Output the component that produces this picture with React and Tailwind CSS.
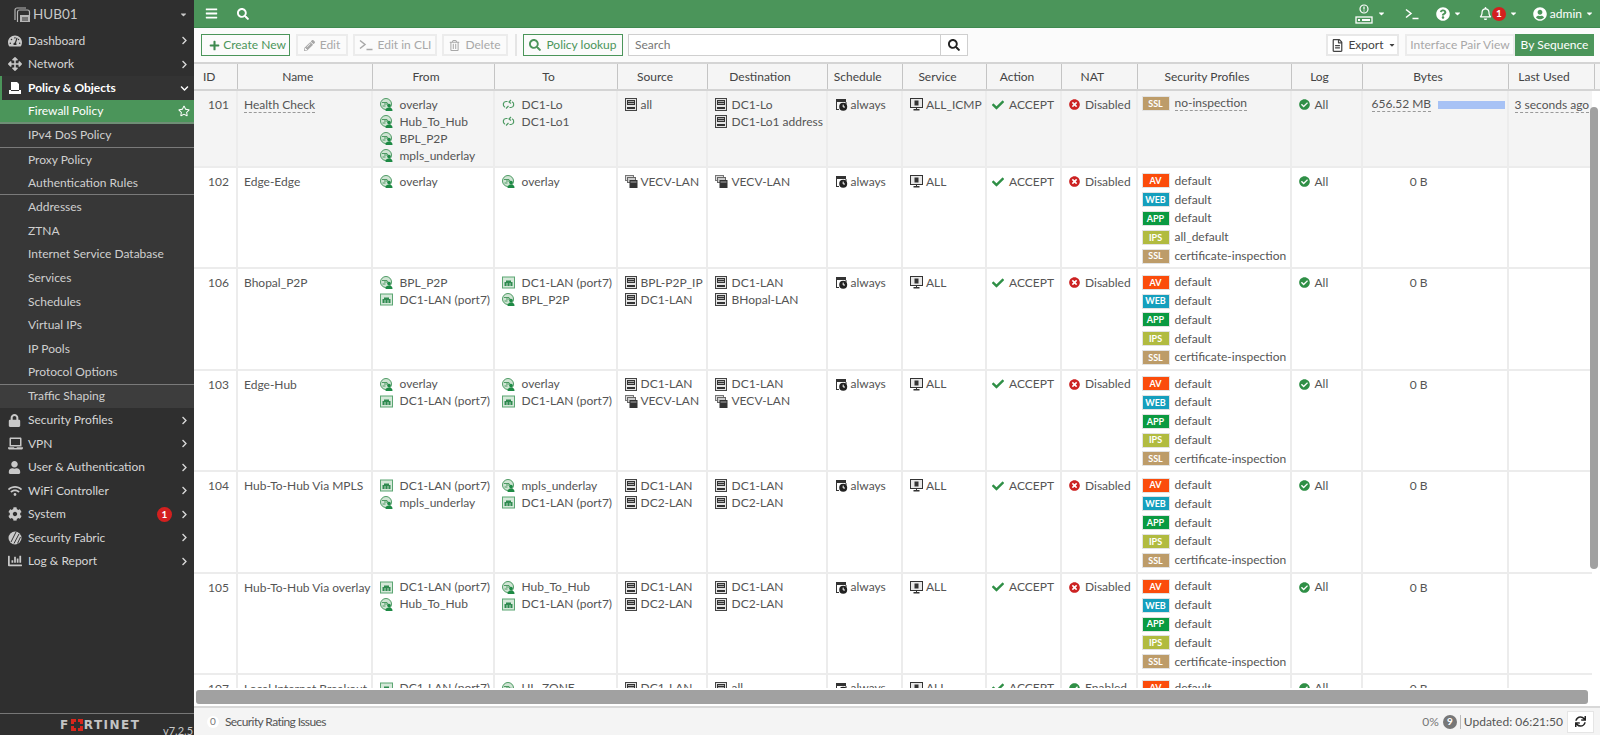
import {
  FaTachometerAlt, FaArrowsAlt, FaLock, FaLaptop, FaUser, FaWifi, FaCog, FaChartBar,
  FaChevronRight, FaChevronDown, FaRegStar, FaSearch, FaBars, FaPlus, FaPencilAlt,
  FaRegTrashAlt, FaRegFileAlt, FaCheck, FaTimesCircle, FaCheckCircle, FaQuestionCircle,
  FaRegBell, FaUserCircle, FaSync, FaCaretDown,
} from 'react-icons/fa'

function PolicyIcon() {
  return (
    <svg width="14" height="14" viewBox="0 0 14 14">
      <path d="M3 1h6l2 2v6H3z" fill="#fff" />
      <path d="M1 9h12v4H1z" fill="#fff" />
      <path d="M3 9h8v1H3z" fill="#333" />
    </svg>
  )
}

function FabricIcon() {
  return (
    <svg width="14" height="14" viewBox="0 0 14 14">
      <circle cx="7" cy="7" r="6.5" fill="#c9c9c9" />
      <path d="M3 11L8 1M6 12.5L11 3M9.5 12.5L12.5 6" stroke="#333" strokeWidth="1" />
    </svg>
  )
}

function HubIcon() {
  return (
    <svg width="20" height="20" viewBox="0 0 20 20" fill="none" stroke="#b5b5b5" strokeWidth="1.2">
      <path d="M3 15V5a2 2 0 0 1 2-2h9" />
      <path d="M5.5 17V7a2 2 0 0 1 2-2h8a2 2 0 0 1 2 2v3" />
      <rect x="8" y="10" width="10" height="7" fill="#b5b5b5" stroke="none" />
      <path d="M10 13h6M10 15h6" stroke="#333" strokeWidth="1" />
    </svg>
  )
}

function ZoneIcon() {
  return (
    <svg width="13" height="13" viewBox="0 0 13 13" className="shrink-0">
      <circle cx="6" cy="6" r="5.5" fill="#cfe4d3" stroke="#4d9a63" strokeWidth="1" />
      <path d="M2 4.5h5l1 1.5H4M2.5 8h3" stroke="#4d9a63" strokeWidth="1" fill="none" />
      <circle cx="9" cy="7.6" r="1.8" fill="#1e8a45" />
      <path d="M5.5 13c0-2.4 1.5-3.4 3.5-3.4s3.5 1 3.5 3.4z" fill="#1e8a45" />
    </svg>
  )
}

function IfaceIcon() {
  return (
    <svg width="13" height="13" viewBox="0 0 13 13" className="shrink-0">
      <rect x="0.5" y="1" width="12" height="11" fill="#d5e8d9" stroke="#5ba672" />
      <path d="M2.5 10V6h1.5V4.5h5V6h1.5v4z" fill="#2f8a50" />
      <path d="M5 7v3M8 7v3" stroke="#d5e8d9" strokeWidth="0.8" />
    </svg>
  )
}

function LoopIcon() {
  return (
    <svg width="13" height="13" viewBox="0 0 13 13" fill="none" stroke="#4d9a63" strokeWidth="1.2" className="shrink-0">
      <path d="M5.5 3.5H4a3 3 0 0 0-1 5.7" />
      <path d="M7.5 9.5H9a3 3 0 0 0 1-5.7" />
      <path d="M6.5 8l-2.5 2.5M9 2l-2 2 2 1.5" />
    </svg>
  )
}

function AddrIcon() {
  return (
    <svg width="13" height="13" viewBox="0 0 13 13" className="shrink-0">
      <rect x="0.5" y="0.5" width="11" height="12" fill="#e4e4e4" stroke="#444" />
      <rect x="2" y="2" width="8" height="5" fill="#333" />
      <path d="M3 3.5h6M3 5.5h6" stroke="#ddd" strokeWidth="0.7" />
      <rect x="2" y="9" width="8" height="2" fill="#333" />
    </svg>
  )
}

function GroupIcon() {
  return (
    <svg width="13" height="13" viewBox="0 0 13 13" className="shrink-0">
      <rect x="0.5" y="0.5" width="8" height="5" fill="#ddd" stroke="#777" />
      <rect x="2.5" y="2.5" width="8" height="5" fill="#ccc" stroke="#666" />
      <rect x="4.5" y="5" width="8" height="8" fill="#333" />
      <path d="M5.5 7h6" stroke="#ddd" strokeWidth="0.7" />
    </svg>
  )
}

function SchedIcon() {
  return (
    <svg width="13" height="13" viewBox="0 0 13 13" className="shrink-0">
      <path d="M1 1h10v3H2v8H1z" fill="#333" />
      <path d="M2 11.5h2" stroke="#333" />
      <path d="M11 4v2" stroke="#333" />
      <circle cx="8.2" cy="8.7" r="4" fill="#222" />
      <path d="M8.2 6.6v2.4h1.8" stroke="#fff" strokeWidth="1" fill="none" />
    </svg>
  )
}

function ServiceIcon() {
  return (
    <svg width="13" height="13" viewBox="0 0 13 13" className="shrink-0">
      <rect x="0.5" y="0.5" width="12" height="9" fill="#e8e8e8" stroke="#333" />
      <path d="M4.5 2.5h4v5h-4z" fill="#333" />
      <path d="M6 9h1v2h2.5v1.5h-6V11H6z" fill="#333" />
    </svg>
  )
}

function DeviceIcon() {
  return (
    <svg width="18" height="20" viewBox="0 0 18 20" fill="none" stroke="#fff">
      <circle cx="9" cy="5" r="4" strokeWidth="1.2" />
      <path d="M9 2.5v3M9 6.5v1" strokeWidth="1.2" />
      <rect x="1" y="13" width="16" height="6" strokeWidth="1.3" />
      <path d="M3 16h2M7 16h8" strokeWidth="2" />
    </svg>
  )
}

function Prompt() {
  return (
    <svg width="14" height="12" viewBox="0 0 14 12" fill="none" stroke="currentColor" strokeWidth="1.5" className="shrink-0">
      <path d="M1 1.5L6 5.5L1 9.5M7.5 10.5H13.5" />
    </svg>
  )
}

const iconKinds = {
  zone: ZoneIcon,
  iface: IfaceIcon,
  loop: LoopIcon,
  addr: AddrIcon,
  group: GroupIcon,
}

const navTop = [
  { label: 'Dashboard', icon: <FaTachometerAlt size={14} /> },
  { label: 'Network', icon: <FaArrowsAlt size={14} /> },
]

const subNav = [
  { label: 'IPv4 DoS Policy', line: true },
  { label: 'Proxy Policy' },
  { label: 'Authentication Rules', line: true },
  { label: 'Addresses' },
  { label: 'ZTNA' },
  { label: 'Internet Service Database' },
  { label: 'Services' },
  { label: 'Schedules' },
  { label: 'Virtual IPs' },
  { label: 'IP Pools' },
  { label: 'Protocol Options', line: true },
  { label: 'Traffic Shaping' },
]

const navBottom = [
  { label: 'Security Profiles', icon: <FaLock size={13} /> },
  { label: 'VPN', icon: <FaLaptop size={15} /> },
  { label: 'User & Authentication', icon: <FaUser size={13} /> },
  { label: 'WiFi Controller', icon: <FaWifi size={14} /> },
  { label: 'System', icon: <FaCog size={14} />, badge: '1' },
  { label: 'Security Fabric', icon: <FabricIcon /> },
  { label: 'Log & Report', icon: <FaChartBar size={14} /> },
]

const columns = [
  { name: 'ID', w: 44, cls: 'text-left pl-[9px]' },
  { name: 'Name', w: 134.5 },
  { name: 'From', w: 122 },
  { name: 'To', w: 123 },
  { name: 'Source', w: 90 },
  { name: 'Destination', w: 120 },
  { name: 'Schedule', w: 75.5 },
  { name: 'Service', w: 84 },
  { name: 'Action', w: 75 },
  { name: 'NAT', w: 75.5 },
  { name: 'Security Profiles', w: 154 },
  { name: 'Log', w: 71 },
  { name: 'Bytes', w: 146 },
  { name: 'Last Used', w: 86 },
]

const stdProfiles = (ips = 'default') => [
  ['AV', 'default'],
  ['WEB', 'default'],
  ['APP', 'default'],
  ['IPS', ips],
  ['SSL', 'certificate-inspection'],
]

const rows = [
  {
    id: 101, name: 'Health Check', dashed: true, height: 'h-[77px]', bg: 'bg-[#f4f4f4]',
    from: [['zone', 'overlay'], ['zone', 'Hub_To_Hub'], ['zone', 'BPL_P2P'], ['zone', 'mpls_underlay']],
    to: [['loop', 'DC1-Lo'], ['loop', 'DC1-Lo1']],
    src: [['addr', 'all']],
    dst: [['addr', 'DC1-Lo'], ['addr', 'DC1-Lo1 address']],
    service: 'ALL_ICMP',
    profiles: [['SSL', 'no-inspection', true]],
    bytes: '656.52 MB', used: '3 seconds ago',
  },
  {
    id: 102, name: 'Edge-Edge',
    from: [['zone', 'overlay']],
    to: [['zone', 'overlay']],
    src: [['group', 'VECV-LAN']],
    dst: [['group', 'VECV-LAN']],
    service: 'ALL',
    profiles: stdProfiles('all_default'),
    bytes: '0 B',
  },
  {
    id: 106, name: 'Bhopal_P2P',
    from: [['zone', 'BPL_P2P'], ['iface', 'DC1-LAN (port7)']],
    to: [['iface', 'DC1-LAN (port7)'], ['zone', 'BPL_P2P']],
    src: [['addr', 'BPL-P2P_IP'], ['addr', 'DC1-LAN']],
    dst: [['addr', 'DC1-LAN'], ['addr', 'BHopal-LAN']],
    service: 'ALL',
    profiles: stdProfiles(),
    bytes: '0 B',
  },
  {
    id: 103, name: 'Edge-Hub',
    from: [['zone', 'overlay'], ['iface', 'DC1-LAN (port7)']],
    to: [['zone', 'overlay'], ['iface', 'DC1-LAN (port7)']],
    src: [['addr', 'DC1-LAN'], ['group', 'VECV-LAN']],
    dst: [['addr', 'DC1-LAN'], ['group', 'VECV-LAN']],
    service: 'ALL',
    profiles: stdProfiles(),
    bytes: '0 B',
  },
  {
    id: 104, name: 'Hub-To-Hub Via MPLS',
    from: [['iface', 'DC1-LAN (port7)'], ['zone', 'mpls_underlay']],
    to: [['zone', 'mpls_underlay'], ['iface', 'DC1-LAN (port7)']],
    src: [['addr', 'DC1-LAN'], ['addr', 'DC2-LAN']],
    dst: [['addr', 'DC1-LAN'], ['addr', 'DC2-LAN']],
    service: 'ALL',
    profiles: stdProfiles(),
    bytes: '0 B',
  },
  {
    id: 105, name: 'Hub-To-Hub Via overlay',
    from: [['iface', 'DC1-LAN (port7)'], ['zone', 'Hub_To_Hub']],
    to: [['zone', 'Hub_To_Hub'], ['iface', 'DC1-LAN (port7)']],
    src: [['addr', 'DC1-LAN'], ['addr', 'DC2-LAN']],
    dst: [['addr', 'DC1-LAN'], ['addr', 'DC2-LAN']],
    service: 'ALL',
    profiles: stdProfiles(),
    bytes: '0 B',
  },
  {
    id: 107, name: 'Local Internet Breakout', nat: true,
    from: [['iface', 'DC1-LAN (port7)']],
    to: [['zone', 'UL_ZONE']],
    src: [['addr', 'DC1-LAN']],
    dst: [['addr', 'all']],
    service: 'ALL',
    profiles: stdProfiles(),
    bytes: '0 B',
  },
]

const badgeColors = {
  AV: 'bg-[#fb4c0b]',
  WEB: 'bg-[#159fbd]',
  APP: 'bg-[#0a9a41]',
  IPS: 'bg-[#b1bb40]',
  SSL: 'bg-[#bd9c69]',
}

function SideRow({ label, icon, badge, open }) {
  return (
    <div className="h-[23.5px] flex items-center text-[#d6d6d6]">
      <span className="w-[28px] pl-[8px] flex items-center text-[#c8c8c8]">{icon}</span>
      <span className="flex-1">{label}</span>
      {badge && (
        <span className="w-[15px] h-[15px] rounded-full bg-[#d3201f] text-white text-[10px] font-bold flex items-center justify-center mr-[8px]">
          {badge}
        </span>
      )}
      {open ? <FaChevronDown size={9} className="mr-[4px]" /> : <FaChevronRight size={9} className="mr-[5px]" />}
    </div>
  )
}

function Sidebar() {
  return (
    <aside className="w-[194px] shrink-0 bg-[#2f2f2f] flex flex-col text-[12px]">
      <div className="h-[29px] flex items-center pl-[12px] pr-[6px] text-[#c8c8c8]">
        <HubIcon />
        <span className="ml-[1px] flex-1 text-[13.5px]">HUB01</span>
        <FaCaretDown size={9} />
      </div>
      {navTop.map(n => <SideRow key={n.label} {...n} />)}

      <div className="bg-[#373737]">
        <div className="h-[24px] flex items-center border-l-[2px] border-[#4b955a] text-white font-bold bg-[#333]">
          <span className="w-[26px] pl-[6px] flex items-center"><PolicyIcon /></span>
          <span className="flex-1">Policy &amp; Objects</span>
          <FaChevronDown size={9} className="mr-[5px]" />
        </div>
        <div className="h-[24px] flex items-center pl-[28px] pr-[4px] bg-[#4b955a] text-white border-b-[2px] border-[#6f8f76]">
          <span className="flex-1">Firewall Policy</span>
          <FaRegStar size={12} />
        </div>
        {subNav.map(n => (
          <div
            key={n.label}
            className={`h-[23.7px] flex items-center pl-[28px] text-[#cfcfcf] ${n.line ? 'border-b-[1.5px] border-[#7a7a7a]' : ''} ${n.label === 'Traffic Shaping' ? 'bg-[#3d3d3d]' : ''}`}
          >
            {n.label}
          </div>
        ))}
      </div>

      {navBottom.map(n => <SideRow key={n.label} {...n} />)}

      <div className="mt-auto h-[22px] border-t-[1.5px] border-[#777] flex items-center relative overflow-hidden">
        <span className="ml-[60px] flex items-center text-[#c4c4c4] font-bold text-[12px] tracking-[1.5px] font-['DejaVu_Sans']">
          F
          <svg width="12" height="12" viewBox="0 0 12 12" className="mx-[1px]">
            <path d="M0 0h5v3H3v2H0zM7 0h5v5H9V3H7zM0 7h3v2h2v3H0zM9 7h3v5H7V9h2z" fill="#d8261c" />
          </svg>
          RTINET
        </span>
        <span className="absolute left-[163px] top-[9px] text-[#c8c8c8] text-[11px]">v7.2.5</span>
      </div>
    </aside>
  )
}

function TopBar() {
  return (
    <header className="h-[28px] shrink-0 bg-[#4b955a] border-b border-[#3f8a50] flex items-center text-white">
      <FaBars size={13} className="ml-[11px]" />
      <FaSearch size={12} className="ml-[19px]" />
      <div className="ml-auto flex items-center">
        <DeviceIcon />
        <FaCaretDown size={9} className="ml-[4px]" />
        <span className="ml-[19px]"><Prompt /></span>
        <FaQuestionCircle size={14} className="ml-[17px]" />
        <FaCaretDown size={9} className="ml-[3px]" />
        <FaRegBell size={13} className="ml-[17px]" />
        <span className="w-[14px] h-[14px] rounded-full bg-[#d3201f] text-[10px] font-bold flex items-center justify-center">1</span>
        <FaCaretDown size={9} className="ml-[3px]" />
        <FaUserCircle size={14} className="ml-[15px]" />
        <span className="ml-[3px] text-[12px]">admin</span>
        <FaCaretDown size={9} className="ml-[3px] mr-[6px]" />
      </div>
    </header>
  )
}

function Toolbtn({ w, icon, children, ml = 'ml-[5px]' }) {
  return (
    <button className={`${w} ${ml} h-[22px] shrink-0 border-2 border-[#ececec] text-[#a8a8a8] flex items-center justify-center gap-[5px]`}>
      {icon}
      {children}
    </button>
  )
}

function Toolbar() {
  return (
    <div className="h-[34px] shrink-0 bg-[#fbfbfb] flex items-center pl-[7px] text-[12px]">
      <button className="w-[89px] h-[22px] shrink-0 border border-[#4b955a] text-[#4b955a] flex items-center justify-center gap-[3px] pl-[4px]">
        <FaPlus size={11} className="text-[#3d8a4e]" />
        Create New
      </button>
      <Toolbtn w="w-[52px]" ml="ml-[6px]" icon={<FaPencilAlt size={11} />}>Edit</Toolbtn>
      <Toolbtn w="w-[84px]" icon={<Prompt />}>Edit in CLI</Toolbtn>
      <Toolbtn w="w-[66px]" icon={<FaRegTrashAlt size={11} />}>Delete</Toolbtn>
      <span className="w-[2px] h-[22px] bg-[#e5e5e5] ml-[7px] mr-[6px]" />
      <button className="w-[100px] h-[22px] shrink-0 border border-[#4b955a] text-[#4b955a] flex items-center justify-center gap-[5px]">
        <FaSearch size={12} />
        Policy lookup
      </button>
      <div className="ml-[5px] w-[340px] h-[22px] border border-[#cfcfcf] bg-white flex items-center">
        <span className="flex-1 pl-[6px] text-[#777]">Search</span>
        <span className="w-[27px] h-full border-l border-[#cfcfcf] flex items-center justify-center text-[#222]">
          <FaSearch size={12} />
        </span>
      </div>
      <div className="ml-auto flex items-center mr-[6px]">
        <button className="w-[73px] h-[22px] border-2 border-[#e8e8e8] bg-white text-[#444] flex items-center justify-center gap-[4px] pl-[2px]">
          <FaRegFileAlt size={13} />
          Export
          <FaCaretDown size={8} />
        </button>
        <span className="ml-[6px] w-[110px] h-[22px] border-2 border-[#ececec] text-[#a8a8a8] flex items-center justify-center whitespace-nowrap">Interface Pair View</span>
        <span className="w-[79px] h-[22px] bg-[#4b955a] text-white flex items-center justify-center whitespace-nowrap">By Sequence</span>
      </div>
    </div>
  )
}

function ItemList({ items, iconGap = 'gap-[7px]' }) {
  return (
    <div className="flex flex-col">
      {items.map(([kind, label]) => {
        const Icon = iconKinds[kind]
        return (
          <div key={label} className={`h-[17px] flex items-center whitespace-nowrap ${iconGap}`}>
            <Icon />
            <span>{label}</span>
          </div>
        )
      })}
    </div>
  )
}

function Dashed({ children }) {
  return <span className="border-b border-dashed border-[#999] leading-[14px] inline-block">{children}</span>
}

function Colgroup({ lastW }) {
  return (
    <colgroup>
      {columns.map((c, i) => (
        <col key={c.name} style={{ width: i === columns.length - 1 && lastW ? lastW : c.w }} />
      ))}
    </colgroup>
  )
}

function PolicyRow({ r }) {
  const td = 'border-r-2 border-b-2 border-[#ececec] align-top pt-[5px] pl-[7px] overflow-hidden'
  return (
    <tr className={`${r.height || 'h-[101.4px]'} ${r.bg || 'bg-white'}`}>
      <td className={`${td} text-right !pl-0 pr-[7px]`}><div className="h-[17px] leading-[17px]">{r.id}</div></td>
      <td className={`${td} !pl-[6px]`}>
        <div className="h-[17px] leading-[17px] whitespace-nowrap">{r.dashed ? <Dashed>{r.name}</Dashed> : r.name}</div>
      </td>
      <td className={td}><ItemList items={r.from} /></td>
      <td className={td}><ItemList items={r.to} /></td>
      <td className={td}><ItemList items={r.src} iconGap="gap-[3px]" /></td>
      <td className={td}><ItemList items={r.dst} iconGap="gap-[4px]" /></td>
      <td className={td}>
        <div className="h-[17px] flex items-center gap-[3px]"><SchedIcon />always</div>
      </td>
      <td className={td}>
        <div className="h-[17px] flex items-center gap-[3px] whitespace-nowrap"><ServiceIcon />{r.service}</div>
      </td>
      <td className={`${td} !pl-[5px]`}>
        <div className="h-[17px] flex items-center gap-[5px]"><FaCheck size={12} className="text-[#2f8f46]" />ACCEPT</div>
      </td>
      <td className={td}>
        <div className="h-[17px] flex items-center gap-[5px]">
          {r.nat
            ? <FaCheckCircle size={11} className="text-[#2f8f46]" />
            : <FaTimesCircle size={11} className="text-[#cc2222]" />}
          {r.nat ? 'Enabled' : 'Disabled'}
        </div>
      </td>
      <td className={`${td} !pt-[3.5px] !pl-[4px]`}>
        {r.profiles.map(([tag, text, dashed], i) => (
          <div key={i} className="h-[18.8px] flex items-center gap-[5px] whitespace-nowrap">
            <span className={`w-[28px] h-[15px] border border-[#e3e3e3] text-white text-[9px] font-bold flex items-center justify-center ${badgeColors[tag]}`}>{tag}</span>
            {dashed ? <Dashed>{text}</Dashed> : <span>{text}</span>}
          </div>
        ))}
      </td>
      <td className={td}>
        <div className="h-[17px] flex items-center gap-[5px]"><FaCheckCircle size={11} className="text-[#2f8f46]" />All</div>
      </td>
      <td className={`${td} !pl-0`}>
        {r.used ? (
          <div className="h-[17px] flex items-center pl-[9px] whitespace-nowrap">
            <Dashed>{r.bytes}</Dashed>
            <span className="ml-[7px] w-[67px] h-[8px] bg-[#a7c2f5]" />
          </div>
        ) : (
          <div className="h-[17px] leading-[17px] pr-[79px] text-right whitespace-nowrap">{r.bytes}</div>
        )}
      </td>
      <td className={`border-b-2 border-[#ececec] align-top pt-[5px] pl-[6px] whitespace-nowrap`}>
        {r.used && <div className="h-[17px] leading-[17px]"><Dashed>{r.used}</Dashed></div>}
      </td>
    </tr>
  )
}

function PolicyTable() {
  return (
    <div className="relative flex-1 min-h-0 bg-white">
      <div className="h-[29px] bg-[#f5f5f5] border-y-2 border-[#d4d4d4] box-border">
        <table className="table-fixed border-separate border-spacing-0 w-[1398px]">
          <Colgroup />
          <thead>
            <tr className="h-[25px]">
              {columns.map(c => (
                <th key={c.name} className={`font-normal border-r border-[#c4c4c4] text-[#444] whitespace-nowrap ${c.cls || 'text-center pr-[14px]'}`}>
                  {c.name}
                </th>
              ))}
            </tr>
          </thead>
        </table>
      </div>
      <div className="h-[597px] overflow-hidden">
        <table className="table-fixed border-separate border-spacing-0 w-[1395px]">
          <Colgroup lastW={83} />
          <tbody>
            {rows.map(r => <PolicyRow key={r.id} r={r} />)}
          </tbody>
        </table>
      </div>
      {/* overlay scrollbars */}
      <div className="absolute left-[2px] right-[12px] top-[628px] h-[14px] rounded-[3px] bg-[#a1a1a1]" />
      <div className="absolute right-[2px] top-[45px] w-[8px] h-[462px] rounded-[4px] bg-[#a1a1a1]" />
    </div>
  )
}

function StatusBar() {
  return (
    <footer className="h-[29px] shrink-0 bg-[#f4f4f4] border-t-2 border-[#d8d8d8] flex items-center text-[12px] text-[#555]">
      <span className="ml-[13px] w-[12px] h-[12px] rounded-full bg-white text-[10px] text-[#777] flex items-center justify-center">0</span>
      <span className="ml-[6px] tracking-[-0.6px]">Security Rating Issues</span>
      <div className="ml-auto flex items-center mr-[6px]">
        <span className="text-[#777]">0%</span>
        <span className="ml-[4px] w-[14px] h-[14px] rounded-full bg-[#777] text-white text-[10px] font-bold flex items-center justify-center">9</span>
        <span className="ml-[3px] w-px h-[14px] bg-[#bbb]" />
        <span className="ml-[3px]">Updated: 06:21:50</span>
        <span className="ml-[4px] w-[27px] h-[22px] bg-white border border-[#e5e5e5] flex items-center justify-center text-[#222]">
          <FaSync size={11} />
        </span>
      </div>
    </footer>
  )
}

export default function App() {
  return (
    <div className="w-[1600px] h-[735px] flex overflow-hidden font-['Lato',sans-serif] text-[12px] text-[#555]">
      <Sidebar />
      <main className="flex-1 min-w-0 flex flex-col">
        <TopBar />
        <Toolbar />
        <PolicyTable />
        <StatusBar />
      </main>
    </div>
  )
}
